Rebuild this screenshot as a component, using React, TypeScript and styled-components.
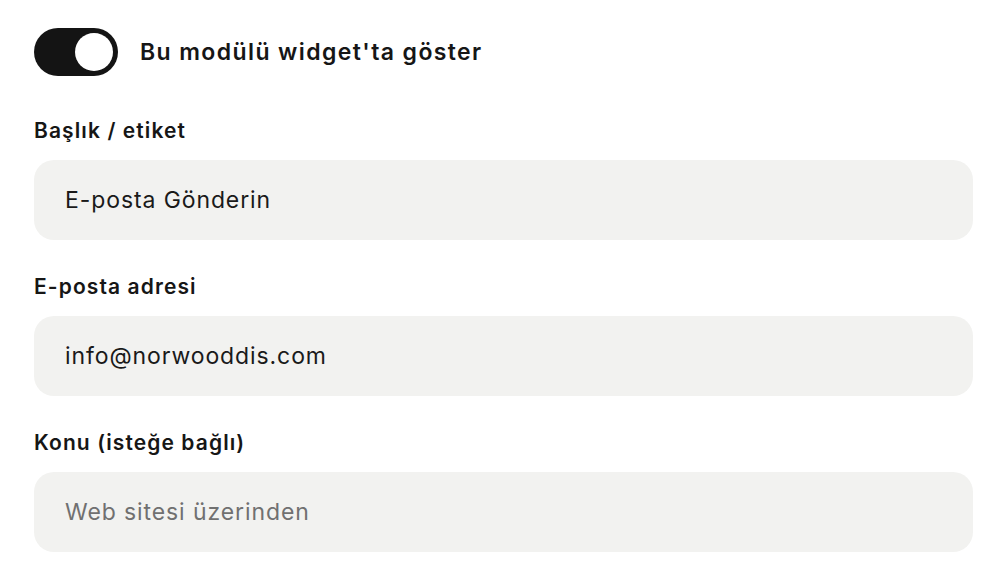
import { useState } from "react";
import styled, { createGlobalStyle } from "styled-components";

const GlobalStyle = createGlobalStyle`
  body {
    margin: 0;
    background: #ffffff;
    font-family: Inter, "Noto Sans", sans-serif;
    color: #161616;
  }
`;

const Panel = styled.div`
  width: 939px;
  padding: 28px 34px 20px;
  display: flex;
  flex-direction: column;
`;

const ToggleRow = styled.label`
  display: flex;
  align-items: center;
  gap: 22px;
  cursor: pointer;
  margin-bottom: 41px;
`;

const Track = styled.span<{ $on: boolean }>`
  position: relative;
  width: 84px;
  height: 48px;
  border-radius: 24px;
  background: ${(p) => (p.$on ? "#141414" : "#d6d6d3")};
  flex-shrink: 0;
`;

const Knob = styled.span<{ $on: boolean }>`
  position: absolute;
  top: 5px;
  left: ${(p) => (p.$on ? "41px" : "5px")};
  width: 38px;
  height: 38px;
  border-radius: 50%;
  background: #ffffff;
`;

const ToggleText = styled.span`
  font-size: 23px;
  font-weight: 600;
  letter-spacing: 1.4px;
`;

const Field = styled.div`
  display: flex;
  flex-direction: column;
  gap: 15px;
  margin-bottom: 33px;

  &:last-child {
    margin-bottom: 0;
  }
`;

const Label = styled.label`
  font-size: 21px;
  font-weight: 600;
  line-height: 28px;
  letter-spacing: 1.1px;
`;

const Input = styled.input`
  box-sizing: border-box;
  width: 100%;
  height: 80px;
  border: none;
  outline: none;
  border-radius: 20px;
  background: #f2f2f0;
  padding: 0 31px;
  font-family: Inter, "Noto Sans", sans-serif;
  font-size: 23px;
  font-weight: 400;
  letter-spacing: 0.9px;
  color: #1a1a1a;

  &::placeholder {
    color: #707070;
  }
`;

export default function App() {
  const [on, setOn] = useState(true);
  return (
    <>
      <GlobalStyle />
      <Panel>
        <ToggleRow onClick={() => setOn(!on)}>
          <Track $on={on}>
            <Knob $on={on} />
          </Track>
          <ToggleText>Bu modülü widget'ta göster</ToggleText>
        </ToggleRow>
        <Field>
          <Label>Başlık / etiket</Label>
          <Input defaultValue="E-posta Gönderin" />
        </Field>
        <Field>
          <Label>E-posta adresi</Label>
          <Input defaultValue="info@norwooddis.com" />
        </Field>
        <Field>
          <Label>Konu (isteğe bağlı)</Label>
          <Input placeholder="Web sitesi üzerinden" />
        </Field>
      </Panel>
    </>
  );
}
